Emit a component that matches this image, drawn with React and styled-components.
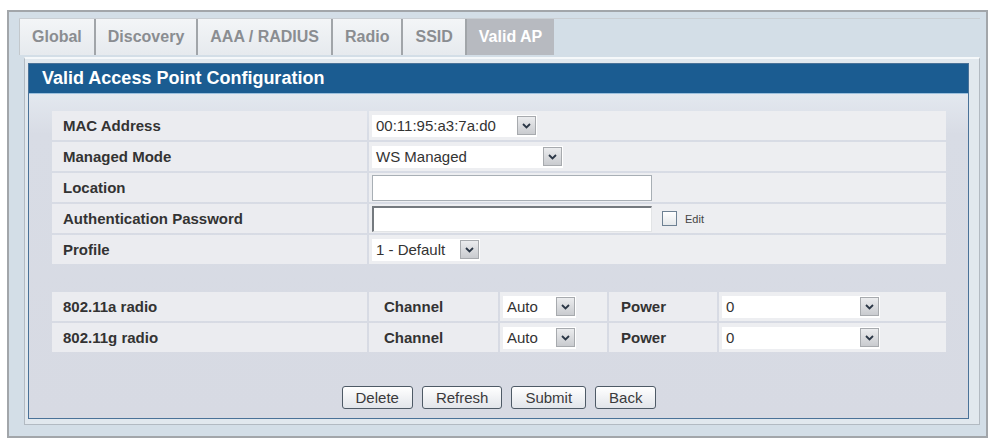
import React from 'react';
import styled, { createGlobalStyle } from 'styled-components';

const GlobalStyle = createGlobalStyle`
  html, body {
    margin: 0;
    padding: 0;
    background: #ffffff;
  }
  body {
    font-family: "Liberation Sans", Arial, sans-serif;
  }
  * {
    box-sizing: border-box;
  }
`;

const TABS = ['Global', 'Discovery', 'AAA / RADIUS', 'Radio', 'SSID', 'Valid AP'];

const FIELDS = [
  { label: 'MAC Address', kind: 'select', value: '00:11:95:a3:7a:d0', width: 165 },
  { label: 'Managed Mode', kind: 'select', value: 'WS Managed', width: 191 },
  { label: 'Location', kind: 'input' },
  { label: 'Authentication Password', kind: 'password' },
  { label: 'Profile', kind: 'select', value: '1 - Default', width: 108 },
];

const RADIOS = ['802.11a radio', '802.11g radio'];

const BUTTONS = ['Delete', 'Refresh', 'Submit', 'Back'];

function Chevron() {
  return (
    <svg width="9" height="6" viewBox="0 0 9 6">
      <path d="M1 1 L4.5 4.5 L8 1" fill="none" stroke="#2b3746" strokeWidth="1.8" />
    </svg>
  );
}

function SelectField({ value, width }) {
  return (
    <SelectBox $width={width}>
      <SelectText>{value}</SelectText>
      <SelectButton>
        <Chevron />
      </SelectButton>
    </SelectBox>
  );
}

function FieldValue({ field }) {
  if (field.kind === 'select') {
    return <SelectField value={field.value} width={field.width} />;
  }
  if (field.kind === 'password') {
    return (
      <>
        <TextInput $inset />
        <CheckBox />
        <EditLabel>Edit</EditLabel>
      </>
    );
  }
  return <TextInput />;
}

function App() {
  return (
    <>
      <GlobalStyle />
      <Page>
        <Frame>
          <TabBar>
            {TABS.map((tab) => (
              <Tab key={tab} $active={tab === 'Valid AP'}>
                {tab}
              </Tab>
            ))}
          </TabBar>
          <Container>
            <Panel>
              <TitleBar>Valid Access Point Configuration</TitleBar>
              <PanelBody>
                <FieldTable>
                  {FIELDS.map((field) => (
                    <React.Fragment key={field.label}>
                      <LabelCell>{field.label}</LabelCell>
                      <ValueCell>
                        <FieldValue field={field} />
                      </ValueCell>
                    </React.Fragment>
                  ))}
                </FieldTable>
                <RadioTable>
                  {RADIOS.map((radio) => (
                    <React.Fragment key={radio}>
                      <LabelCell>{radio}</LabelCell>
                      <LabelCell $indent={15}>Channel</LabelCell>
                      <ValueCell>
                        <SelectField value="Auto" width={73} />
                      </ValueCell>
                      <LabelCell $indent={12}>Power</LabelCell>
                      <ValueCell>
                        <SelectField value="0" width={158} />
                      </ValueCell>
                    </React.Fragment>
                  ))}
                </RadioTable>
                <ButtonRow>
                  {BUTTONS.map((b) => (
                    <Button key={b}>{b}</Button>
                  ))}
                </ButtonRow>
              </PanelBody>
            </Panel>
          </Container>
        </Frame>
      </Page>
    </>
  );
}

const Page = styled.div`
  width: 993px;
  height: 443px;
  padding: 10px 5px 5px 7px;
`;

const Frame = styled.div`
  width: 981px;
  height: 428px;
  border: 2px solid #a2a6aa;
  background: #d3dee7;
  padding: 6px 6px 0 10px;
`;

const TabBar = styled.div`
  display: flex;
  height: 37px;
  border-top: 1px solid #c9ced3;
`;

const Tab = styled.div`
  display: flex;
  align-items: center;
  padding: 0 12px;
  font-size: 16px;
  font-weight: bold;
  color: ${(p) => (p.$active ? '#ffffff' : '#8a8d91')};
  background: ${(p) =>
    p.$active ? '#b7bac0' : 'linear-gradient(#f3f5f7, #e6eaee)'};
  border-right: ${(p) => (p.$active ? 'none' : '2px solid #a1a5a9')};
  &:first-child {
    border-left: 1px solid #c3c8cc;
  }
`;

const Container = styled.div`
  margin: 2px 0 0 5px;
  width: 956px;
  height: 368px;
  background: #e1e8ee;
  border: 1px solid #b2bac2;
  border-top: 2px solid #f5f8fa;
  padding: 4px 0 0 3px;
`;

const Panel = styled.div`
  width: 941px;
  height: 356px;
  border: 1px solid #4a7298;
  display: flex;
  flex-direction: column;
`;

const TitleBar = styled.div`
  height: 30px;
  flex-shrink: 0;
  display: flex;
  align-items: center;
  padding-left: 13px;
  background: #1b5c91;
  border-bottom: 1px solid #9cc0dd;
  color: #ffffff;
  font-size: 18px;
  font-weight: bold;
`;

const PanelBody = styled.div`
  flex: 1;
  padding: 17px 22px 0 23px;
  background: linear-gradient(#e3e8ef 0, #d8dce5 40px, #d7dae3 100%);
`;

const FieldTable = styled.div`
  display: grid;
  grid-template-columns: 315px 1fr;
  grid-auto-rows: 29px;
  gap: 2px;
`;

const RadioTable = styled.div`
  display: grid;
  grid-template-columns: 315px 129px 107px 108px 1fr;
  grid-auto-rows: 29px;
  gap: 2px;
  margin-top: 28px;
`;

const LabelCell = styled.div`
  display: flex;
  align-items: center;
  padding-left: ${(p) => p.$indent || 11}px;
  background: #ebecf0;
  color: #333333;
  font-size: 15px;
  font-weight: bold;
`;

const ValueCell = styled.div`
  display: flex;
  align-items: center;
  padding-left: 3px;
  background: #edeef1;
`;

const SelectBox = styled.div`
  display: flex;
  align-items: center;
  justify-content: space-between;
  width: ${(p) => p.$width}px;
  height: 22px;
  background: #ffffff;
  padding: 0 1px 0 4px;
`;

const SelectText = styled.span`
  font-size: 15px;
  color: #333333;
  white-space: nowrap;
`;

const SelectButton = styled.span`
  display: flex;
  align-items: center;
  justify-content: center;
  width: 19px;
  height: 19px;
  background: linear-gradient(#ebecee, #c9cbcf);
  border: 1px solid #a7aaae;
`;

const TextInput = styled.div`
  width: 280px;
  height: 26px;
  background: #ffffff;
  border: 1px solid #a8afb5;
  ${(p) =>
    p.$inset &&
    `
    border-top: 2px solid #74797e;
    border-left: 2px solid #74797e;
    border-right: 1px solid #e2e4e6;
    border-bottom: 1px solid #e2e4e6;
  `}
`;

const CheckBox = styled.span`
  width: 15px;
  height: 15px;
  margin-left: 10px;
  border: 1px solid #6e8193;
  background: linear-gradient(#ffffff, #e5e8eb);
`;

const EditLabel = styled.span`
  margin-left: 8px;
  font-size: 11px;
  color: #444444;
`;

const ButtonRow = styled.div`
  display: flex;
  justify-content: center;
  gap: 9px;
  margin-top: 34px;
`;

const Button = styled.div`
  height: 23px;
  padding: 0 13px;
  display: flex;
  align-items: center;
  border: 1px solid #4e5a66;
  border-radius: 3px;
  background: linear-gradient(#ffffff, #e2e5ea);
  color: #3a3a3c;
  font-size: 15px;
`;

export default App;
